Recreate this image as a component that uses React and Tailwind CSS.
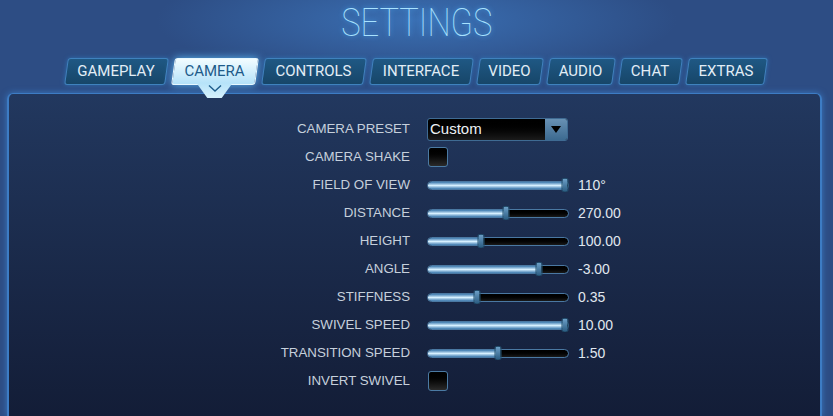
import React from 'react'

const tabs = [
  { label: 'GAMEPLAY', w: 'w-[101px]' },
  { label: 'CAMERA', w: 'w-[84px]', active: true },
  { label: 'CONTROLS', w: 'w-[102px]' },
  { label: 'INTERFACE', w: 'w-[101px]' },
  { label: 'VIDEO', w: 'w-[64px]' },
  { label: 'AUDIO', w: 'w-[66px]' },
  { label: 'CHAT', w: 'w-[61px]' },
  { label: 'EXTRAS', w: 'w-[79px]' },
]

const rows = [
  { label: 'CAMERA PRESET', type: 'select' },
  { label: 'CAMERA SHAKE', type: 'check' },
  { label: 'FIELD OF VIEW', type: 'slider', pct: 98, value: '110°' },
  { label: 'DISTANCE', type: 'slider', pct: 56, value: '270.00' },
  { label: 'HEIGHT', type: 'slider', pct: 38, value: '100.00' },
  { label: 'ANGLE', type: 'slider', pct: 79, value: '-3.00' },
  { label: 'STIFFNESS', type: 'slider', pct: 35, value: '0.35' },
  { label: 'SWIVEL SPEED', type: 'slider', pct: 98, value: '10.00' },
  { label: 'TRANSITION SPEED', type: 'slider', pct: 50, value: '1.50' },
  { label: 'INVERT SWIVEL', type: 'check' },
]

function Tab({ label, w, active }) {
  return (
    <div className={`relative ${w} h-[27px]`}>
      <div
        className={`absolute inset-0 -skew-x-[8deg] rounded-[3px] border ${
          active
            ? 'border-[#e6f8ff] bg-gradient-to-b from-[#f2fcff] to-[#b4e2f9] shadow-[0_0_8px_#5cb8f5]'
            : 'border-[#3f82bd] bg-gradient-to-b from-[#1f5884] to-[#174669] shadow-[0_0_4px_#2f6fb0]'
        }`}
      />
      {active && (
        <div className="absolute left-1/2 top-[25px] -translate-x-1/2 w-[36px] h-[15px] bg-gradient-to-b from-[#b6e3f9] to-[#d6f1fd] [clip-path:polygon(0_0,100%_0,70%_100%,30%_100%)] flex justify-center pt-[2px]">
          <svg width="14" height="7" viewBox="0 0 14 7">
            <path d="M1 0.5 L7 6 L13 0.5" fill="none" stroke="#1e5d8c" strokeWidth="1.4" />
          </svg>
        </div>
      )}
      <div
        className={`relative h-full flex items-center justify-center text-[15px] font-['Roboto',sans-serif] ${
          active ? 'text-[#1d5b8a]' : 'text-[#e2edf6]'
        }`}
      >
        {label}
      </div>
    </div>
  )
}

function Slider({ pct, value }) {
  return (
    <div className="flex items-center">
      <div className="relative w-[142px] h-[9px] rounded-full border border-[#4a78a2] bg-gradient-to-b from-[#000] to-[#1a1a1a]">
        <div
          className="absolute left-0 top-0 bottom-0 rounded-full bg-gradient-to-b from-[#3b79ad] via-[#d6f0ff] to-[#3b79ad]"
          style={{ width: `${pct}%` }}
        />
        <div
          className="absolute top-1/2 -translate-y-1/2 -translate-x-1/2 w-[7px] h-[14px] rounded-[2px] bg-gradient-to-b from-[#6b9ec6] to-[#2d5f85] border border-[#23506f]"
          style={{ left: `${pct}%` }}
        />
      </div>
      <span className="ml-[9px] text-[14px] text-[#e0e7ef] font-['Liberation_Sans',sans-serif]">{value}</span>
    </div>
  )
}

function Check() {
  return (
    <div className="ml-[1px] w-[20px] h-[20px] rounded-[3px] border border-[#4b7aa3] bg-gradient-to-b from-[#000] to-[#2b2b2b]" />
  )
}

function Select() {
  return (
    <div className="flex w-[141px] h-[23px] rounded-[3px] border border-[#3f6b93] bg-gradient-to-b from-[#000] to-[#1b1b1b] overflow-hidden">
      <div className="flex-1 flex items-center pl-[2px] text-[15px] text-[#edf1f5] font-['Liberation_Sans',sans-serif]">Custom</div>
      <div className="w-[22px] flex items-center justify-center bg-gradient-to-b from-[#6891b4] to-[#3c6a90]">
        <svg width="10" height="7" viewBox="0 0 10 7">
          <path d="M0 0 H10 L5 7 Z" fill="#000" />
        </svg>
      </div>
    </div>
  )
}

export default function App() {
  return (
    <div className="w-[833px] h-[416px] overflow-hidden flex flex-col bg-[radial-gradient(ellipse_260px_60px_at_50%_20px,#3a6fb3_0%,#2d4d84_100%)] bg-[#2c4b81]">
      {/* Title */}
      <div className="h-[58px] flex justify-center pt-[1px]">
        <h1 className="text-[38px] leading-[44px] font-thin font-['Roboto',sans-serif] text-[#a8e2ff] scale-x-[0.86] [text-shadow:0_0_6px_#4aa9f2]">
          SETTINGS
        </h1>
      </div>

      {/* Tabs */}
      <div className="h-[35px] flex justify-center gap-[6px] pr-[2px] relative z-10">
        {tabs.map((t) => (
          <Tab key={t.label} {...t} />
        ))}
      </div>

      {/* Panel */}
      <div className="ml-[7px] mr-[11px] flex-1 rounded-t-[6px] border-l-2 border-t border-r-2 border-[#3d7cc4] shadow-[0_0_6px_#3a78c0] bg-gradient-to-b from-[#22385f] to-[#131d37] pt-[21px]">
        {rows.map((r) => (
          <div key={r.label} className="h-[28px] flex items-center">
            <div className="w-[401px] text-right text-[13.3px] text-[#c6d0dc] font-['Liberation_Sans',sans-serif]">
              {r.label}
            </div>
            <div className="ml-[17px]">
              {r.type === 'select' && <Select />}
              {r.type === 'check' && <Check />}
              {r.type === 'slider' && <Slider pct={r.pct} value={r.value} />}
            </div>
          </div>
        ))}
      </div>
    </div>
  )
}
